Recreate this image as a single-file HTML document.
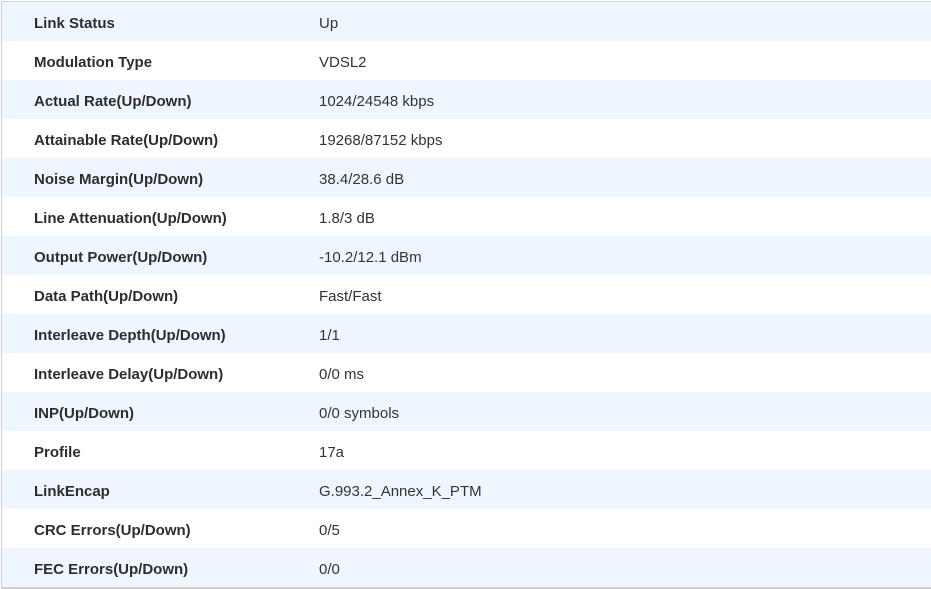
<!DOCTYPE html>
<html><head><style>
html,body{margin:0;padding:0;background:#fff;width:931px;height:589px;overflow:hidden}
.t{position:absolute;left:1px;top:1px;width:930px;border-top:1px solid #d0d0d0;border-left:1px solid #d0d0d0;border-bottom:2px solid #d0d0d0;font-family:"Liberation Sans",Arial,sans-serif;font-size:15px;color:#333}
.r{height:39px;position:relative;background:#fff}
.r:nth-child(odd){background:#eef7ff}
.l{position:absolute;left:32px;top:13px;font-weight:bold;color:#2d2d2d}
.v{position:absolute;left:317px;top:13px;color:#333}
</style></head><body><div class="t">
<div class="r"><span class="l">Link Status</span><span class="v">Up</span></div>
<div class="r"><span class="l">Modulation Type</span><span class="v">VDSL2</span></div>
<div class="r"><span class="l">Actual Rate(Up/Down)</span><span class="v">1024/24548 kbps</span></div>
<div class="r"><span class="l">Attainable Rate(Up/Down)</span><span class="v">19268/87152 kbps</span></div>
<div class="r"><span class="l">Noise Margin(Up/Down)</span><span class="v">38.4/28.6 dB</span></div>
<div class="r"><span class="l">Line Attenuation(Up/Down)</span><span class="v">1.8/3 dB</span></div>
<div class="r"><span class="l">Output Power(Up/Down)</span><span class="v">-10.2/12.1 dBm</span></div>
<div class="r"><span class="l">Data Path(Up/Down)</span><span class="v">Fast/Fast</span></div>
<div class="r"><span class="l">Interleave Depth(Up/Down)</span><span class="v">1/1</span></div>
<div class="r"><span class="l">Interleave Delay(Up/Down)</span><span class="v">0/0 ms</span></div>
<div class="r"><span class="l">INP(Up/Down)</span><span class="v">0/0 symbols</span></div>
<div class="r"><span class="l">Profile</span><span class="v">17a</span></div>
<div class="r"><span class="l">LinkEncap</span><span class="v">G.993.2_Annex_K_PTM</span></div>
<div class="r"><span class="l">CRC Errors(Up/Down)</span><span class="v">0/5</span></div>
<div class="r"><span class="l">FEC Errors(Up/Down)</span><span class="v">0/0</span></div>
</div></body></html>
